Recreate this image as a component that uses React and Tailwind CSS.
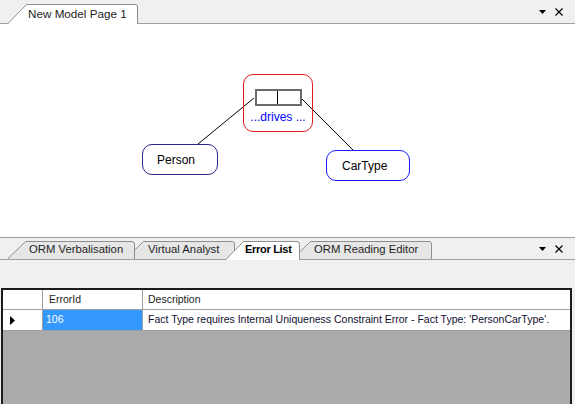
import React from "react";

function TabShape({ w, h, slant, fill, stroke = "#8e8e8e", openBottom }) {
  const d = `M0.5 ${h} L${slant + 0.5} 0.5 H${w - 3} Q${w - 0.5} 0.5 ${w - 0.5} 3 V${h}`;
  return (
    <svg className="absolute inset-0" width={w} height={h} viewBox={`0 0 ${w} ${h}`}>
      <path d={d + (openBottom ? "" : " Z")} fill={fill} stroke="none" />
      <path d={d} fill="none" stroke={stroke} strokeWidth="1" />
    </svg>
  );
}

function PanelButtons() {
  return (
    <div className="flex items-center gap-[9px]">
      <svg width="7" height="4" viewBox="0 0 7 4">
        <path d="M0 0 H7 L3.5 4 Z" fill="#000" />
      </svg>
      <svg width="8" height="8" viewBox="0 0 8 8">
        <path d="M0.5 0.5 L7.5 7.5 M7.5 0.5 L0.5 7.5" stroke="#000" strokeWidth="1.2" />
      </svg>
    </div>
  );
}

export default function App() {
  return (
    <div className="w-[575px] h-[404px] flex flex-col bg-[#f0f0f0] overflow-hidden font-['Liberation_Sans',Arial,sans-serif] text-black">
      {/* top tab strip */}
      <div className="h-[24px] shrink-0 flex items-end border-b border-[#a0a0a0] relative">
        <div className="relative ml-[7px] w-[131px] h-[20px] mb-[-1px] shrink-0 z-[2]">
          <TabShape w={131} h={20} slant={19} fill="#ffffff" openBottom />
          <span className="relative block pl-[21px] pt-[2px] text-[11.7px] leading-[15px] text-[#1e1e1e]">New Model Page 1</span>
        </div>
        <div className="ml-auto mr-[12px] self-center mt-[1px]">
          <PanelButtons />
        </div>
      </div>

      {/* canvas */}
      <div className="h-[213px] shrink-0 bg-white relative">
        <svg className="absolute inset-0" width="575" height="213">
          <line x1="254" y1="74" x2="198" y2="120" stroke="#000" strokeWidth="1" />
          <line x1="301" y1="74" x2="353" y2="126" stroke="#000" strokeWidth="1" />
        </svg>
        <div className="absolute left-[243px] top-[50px] w-[70px] h-[58px] rounded-[10px] border border-[#e31b23] flex flex-col items-center">
          <div className="mt-[14px] w-[47px] h-[17px] border-2 border-[#6b6b6b] bg-white flex">
            <div className="w-[21px] h-full border-r border-black"></div>
          </div>
          <div className="mt-[4px] text-[12px] leading-[14px] text-[#0000ff]">...drives ...</div>
        </div>
        <div className="absolute left-[142px] top-[120px] w-[76px] h-[31px] rounded-[10px] border border-[#26268c] bg-white flex items-center pl-[14px] text-[12px]">
          Person
        </div>
        <div className="absolute left-[326px] top-[126px] w-[84px] h-[31px] rounded-[10px] border border-[#1a1aff] bg-white flex items-center pl-[15px] text-[12px]">
          CarType
        </div>
      </div>

      {/* bottom tab strip */}
      <div className="h-[23px] shrink-0 flex items-end border-t border-b border-[#a0a0a0] relative">
        <div className="relative ml-[7px] w-[128px] h-[18px] shrink-0 z-[4]">
          <TabShape w={128} h={18} slant={18} fill="#e6e6e6" />
          <span className="relative block pl-[22px] pt-[1px] text-[11.3px] leading-[15px] text-[#1e1e1e]">ORM Verbalisation</span>
        </div>
        <div className="relative ml-[-10px] w-[110px] h-[18px] shrink-0 z-[3]">
          <TabShape w={110} h={18} slant={18} fill="#e6e6e6" />
          <span className="relative block pl-[23px] pt-[1px] text-[11.3px] leading-[15px] text-[#1e1e1e]">Virtual Analyst</span>
        </div>
        <div className="relative ml-[-10px] w-[75px] h-[19px] mb-[-1px] shrink-0 z-[5]">
          <TabShape w={75} h={19} slant={18} fill="#ffffff" openBottom />
          <span className="relative block pl-[20px] pt-[1px] text-[11px] tracking-[-0.3px] leading-[15px] font-bold text-black">Error List</span>
        </div>
        <div className="relative ml-[-8px] w-[140px] h-[18px] shrink-0 z-[1]">
          <TabShape w={140} h={18} slant={18} fill="#e6e6e6" />
          <span className="relative block pl-[22px] pt-[1px] text-[11.3px] leading-[15px] text-[#1e1e1e]">ORM Reading Editor</span>
        </div>
        <div className="ml-auto mr-[12px] self-center">
          <PanelButtons />
        </div>
      </div>

      {/* toolbar */}
      <div className="h-[28px] shrink-0 bg-[#f0f0f0]"></div>

      {/* grid */}
      <div className="flex-1 ml-[1px] mr-[3px] border-2 border-b-0 border-[#1c1c1c] bg-[#ababab] flex flex-col text-[10.5px]">
        <div className="h-[20px] flex bg-white border-b border-[#a0a0a0]">
          <div className="w-[40px] border-r border-[#a0a0a0]"></div>
          <div className="w-[100px] border-r border-[#a0a0a0] flex items-center pl-[6px] text-[#1e1e1e]">ErrorId</div>
          <div className="flex-1 flex items-center pl-[5px] text-[#1e1e1e]">Description</div>
        </div>
        <div className="h-[21px] flex bg-white border-b border-[#a0a0a0]">
          <div className="w-[40px] border-r border-[#a0a0a0] flex items-center pl-[7px]">
            <svg width="5" height="9" viewBox="0 0 5 9">
              <path d="M0 0 L5 4.5 L0 9 Z" fill="#000" />
            </svg>
          </div>
          <div className="w-[100px] border-r border-[#a0a0a0] bg-[#3399ff] text-white flex items-center pl-[3px]">106</div>
          <div className="flex-1 flex items-center pl-[5px] text-[#101030] whitespace-nowrap">
            Fact Type requires Internal Uniqueness Constraint Error - Fact Type: 'PersonCarType'.
          </div>
        </div>
      </div>
    </div>
  );
}
